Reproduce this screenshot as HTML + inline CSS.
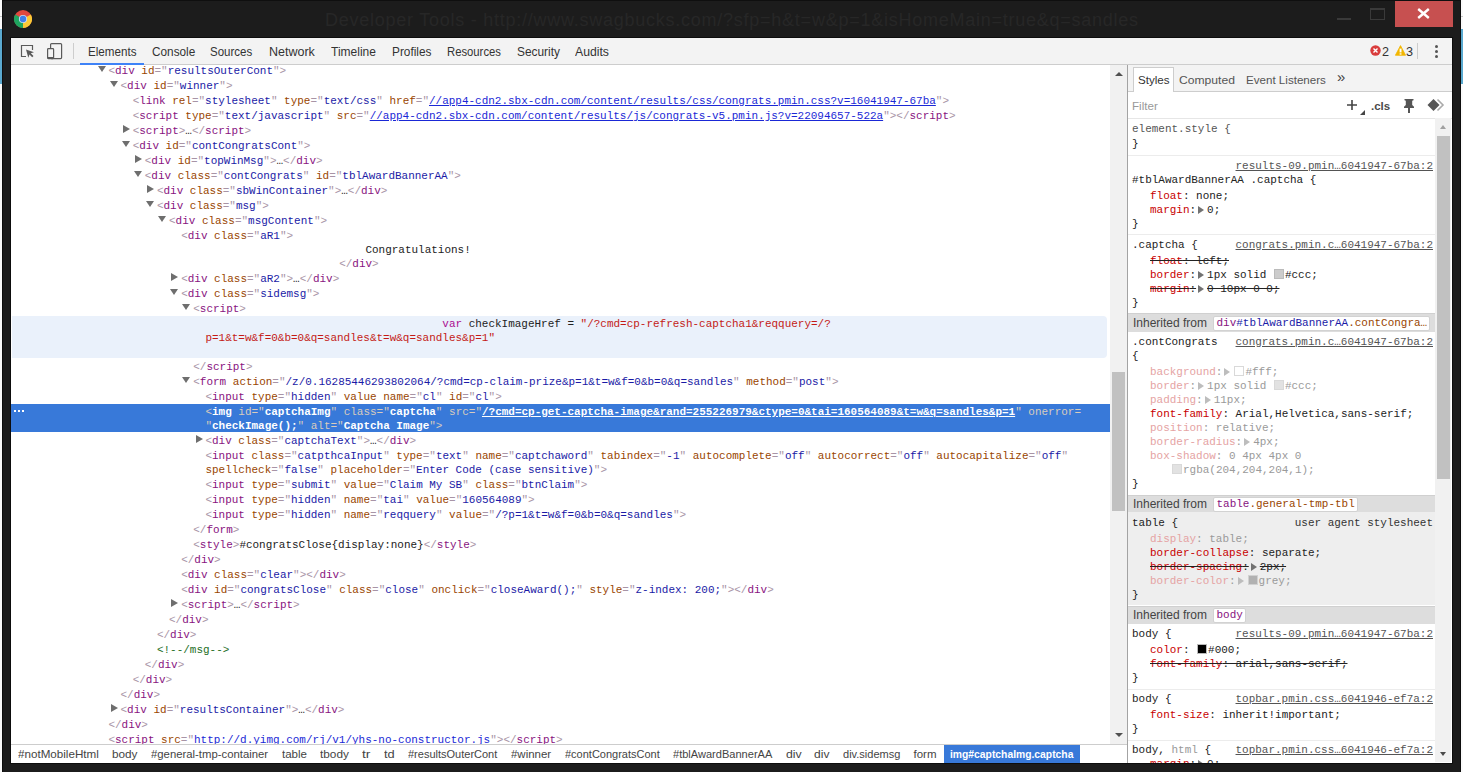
<!DOCTYPE html>
<html><head><meta charset="utf-8">
<style>
*{margin:0;padding:0;box-sizing:border-box}
html,body{width:1463px;height:772px;overflow:hidden;background:#1c1c1c;position:relative;font-family:"Liberation Sans",sans-serif}
.abs{position:absolute}
.mono{font-family:"Liberation Mono",monospace}
/* strips */
#ls,#rs{position:absolute;top:0;width:2px;height:772px;background:#fafafa}
#ls{left:0}#rs{left:1461px}
.sblue{position:absolute;left:0;top:29px;width:2px;height:55px;background:#5aa9cf}
.sgrey{position:absolute;left:0;top:16px;width:2px;height:1px;background:#c8c8c8}
/* frame edges */
#title{position:absolute;left:325px;top:8px;font-size:18px;letter-spacing:0.75px;color:#272727;white-space:pre;line-height:24px}
#closeb{position:absolute;left:1395px;top:1px;width:58px;height:26px;background:#c75050}
/* toolbar */
#tb{position:absolute;left:11px;top:38px;width:1441px;height:27px;background:#f3f3f3;border-bottom:1px solid #cdcdcd}
.tab{position:absolute;top:45px;font-size:11.6px;color:#333;line-height:14px;white-space:pre}
#main{position:absolute;left:11px;top:65px;width:1441px;height:698px;background:#fff}
#tree{position:absolute;left:11px;top:65px;width:1099px;height:679px;overflow:hidden;background:#fff}
.ln{position:absolute;white-space:pre;font-family:"Liberation Mono",monospace;font-size:10.97px;line-height:14px;color:#222}
.br{color:#a894a6}.tg{color:#881280}.at{color:#994500}.av{color:#1a1aa6}.lk{color:#1a28d6;text-decoration:underline}
.tx{color:#222}.cm{color:#236e25}.kw{color:#aa0d91}.st{color:#c41a16}
.sl .br,.sl .at{color:#d9ccbc}.sl .tg,.sl .av,.sl .lk,.sl .tx{color:#fff;font-weight:bold}
.sl .lk{text-decoration:underline}
.selrow{position:absolute;left:11px;width:1099px;background:#3879d9}
.hlbox{position:absolute;left:12px;width:1095px;background:#eaf1fb;border-radius:0 4px 4px 0}
.dots{position:absolute;left:14px;width:10px;height:2px;background:
 linear-gradient(90deg,#fff 0,#fff 2px,transparent 2px,transparent 4px,#fff 4px,#fff 6px,transparent 6px,transparent 8px,#fff 8px,#fff 10px)}
.trid{position:absolute;width:0;height:0;border-left:4px solid transparent;border-right:4px solid transparent;border-top:6.5px solid #6e6e6e;margin-top:2px}
.trir{position:absolute;width:0;height:0;border-top:4px solid transparent;border-bottom:4px solid transparent;border-left:7px solid #6e6e6e;margin-top:1px;margin-left:1px}
/* scrollbar */
#vs{position:absolute;left:1110px;top:65px;width:17px;height:679px;background:#f1f1f1}
#vsep{position:absolute;left:1127px;top:65px;width:1px;height:698px;background:#a3a3a3}
/* breadcrumbs */
#bc{position:absolute;left:11px;top:744px;width:1116px;height:19px;background:#fff;border-top:1px solid #cdcdcd}
.crumb{position:absolute;top:748px;font-size:11.5px;color:#333;line-height:14px;white-space:pre}
/* sidebar */
#side{position:absolute;left:1128px;top:65px;width:324px;height:698px;background:#fff;overflow:hidden}
#stabs{position:absolute;left:0;top:0;width:324px;height:27px;background:#f3f3f3;border-bottom:1px solid #cdcdcd}
.stab{position:absolute;top:7px;font-size:11.6px;color:#333;line-height:14px;white-space:pre}
#filter{position:absolute;left:0;top:27px;width:324px;height:27px;background:#fff;border-bottom:1px solid #e6e6e6}
#spane{position:absolute;left:0;top:53px;width:307px;height:645px;overflow:hidden}
#spane .inner{position:absolute;left:0;top:-118px;width:307px;height:900px}
.sl2{position:absolute;white-space:pre;font-family:"Liberation Mono",monospace;font-size:10.97px;line-height:14px;color:#222}
.sel{color:#222}.es{color:#555}.nm{color:#999}
.pn{color:#c80000}.pv{color:#222}
.ina .pn{color:#e5a3a3}.ina .pv{color:#9a9a9a}.ina .etri:before{border-left-color:#bdbdbd}.ina .sw{opacity:.55}
.strk{text-decoration:line-through;text-decoration-color:#222}
.slink{position:absolute;right:2px;white-space:pre;font-family:"Liberation Mono",monospace;font-size:10.97px;line-height:14px;color:#545454;text-decoration:underline}
.slink.ua{text-decoration:none;color:#333}
.ssep{position:absolute;left:0;width:307px;height:1px;background:#ececec}
.inh{position:absolute;left:0;width:307px;height:18.6px;background:#dddddd;border-top:1px solid #d0d0d0}
.inhl{position:absolute;left:5px;top:1.5px;font-size:12px;color:#444;line-height:14px;white-space:pre}
.inhbox{position:absolute;left:84.5px;top:1.5px;height:15px;background:#fff;border:1px solid #d2d2d2;border-radius:2px;font-family:"Liberation Mono",monospace;font-size:10.97px;line-height:13px;padding-left:3px;white-space:pre;overflow:hidden}
.etri{display:inline-block;width:11px;height:9px;position:relative;vertical-align:-1px}
.etri:before{content:"";position:absolute;left:2px;top:1px;border-top:4px solid transparent;border-bottom:4px solid transparent;border-left:6px solid #727272}
.sw{display:inline-block;width:10px;height:10px;border:1px solid #bbb;vertical-align:-1px;margin:0 1px 0 1px}
#svs{position:absolute;left:1435px;top:118px;width:16px;height:643.6px;background:#f1f1f1}
</style></head><body>
<div class="abs" style="left:2px;top:0;width:1459px;height:1px;background:#0f0f0f"></div>
<div class="abs" style="left:2px;top:0;width:1px;height:772px;background:#0d0d0d"></div>
<div class="abs" style="left:1460px;top:0;width:1px;height:772px;background:#0d0d0d"></div>
<div class="abs" style="left:10px;top:37px;width:1443px;height:727px;background:#0d0d0d"></div>
<div id="ls"><div class="sgrey"></div><div class="sblue"></div></div>
<div id="rs"><div class="sgrey"></div><div class="sblue"></div></div>

<!-- chrome logo -->
<svg class="abs" style="left:14px;top:10px" width="18" height="18" viewBox="0 0 18 18">
 <circle cx="9" cy="9" r="9" fill="#e0483e"/>
 <path d="M9 9 L1.2 4.5 A9 9 0 0 0 9 18 Z" fill="#1ea55f"/>
 <path d="M9 9 L9 18 A9 9 0 0 0 16.8 4.5 Z" fill="#fbc936"/>
 <circle cx="9" cy="9" r="4.1" fill="#c9dcf6"/>
 <circle cx="9" cy="9" r="3.2" fill="#3f7fe9"/>
</svg>
<div id="title">Developer Tools - http://www.swagbucks.com/?sfp=h&amp;t=w&amp;p=1&amp;isHomeMain=true&amp;q=sandles</div>
<div class="abs" style="left:1337px;top:18px;width:14px;height:2px;background:#3a3a3a"></div>
<div class="abs" style="left:1370px;top:8px;width:15px;height:12px;border:1px solid #3a3a3a;border-top-width:2px"></div>
<div id="closeb"></div>
<svg class="abs" style="left:1417px;top:8px" width="13" height="11" viewBox="0 0 13 11"><path d="M1.2 1 L11.8 10 M11.8 1 L1.2 10" stroke="#fff" stroke-width="2.4"/></svg>

<div id="tb"></div>
<!-- toolbar icons -->
<svg class="abs" style="left:20px;top:44px" width="16" height="16" viewBox="0 0 16 16">
 <path d="M6 12.5 H1.5 V1.5 H12.5 V6" fill="none" stroke="#5a5a5a" stroke-width="1.2"/>
 <path d="M6 5.5 L14 8.2 L10.8 9.3 L13.5 12 L12.2 13.3 L9.5 10.6 L8.3 13.8 Z" fill="#5a5a5a"/>
</svg>
<svg class="abs" style="left:46px;top:42px" width="17" height="18" viewBox="0 0 17 18">
 <rect x="4.6" y="1.6" width="11" height="15" rx="1" fill="none" stroke="#5a5a5a" stroke-width="1.2"/>
 <rect x="1.6" y="6.6" width="6" height="10" rx="0.8" fill="#f3f3f3" stroke="#5a5a5a" stroke-width="1.2"/>
 <rect x="1.6" y="15" width="6" height="1.8" fill="#5a5a5a"/>
</svg>
<div class="abs" style="left:73px;top:43px;width:1px;height:16px;background:#cdcdcd"></div>
<div class="abs" style="left:87.80px;top:44.80px;font-size:12.2px;line-height:14px;white-space:pre;color:#333;transform:scaleX(0.9537);transform-origin:0 0;">Elements</div>
<div class="abs" style="left:151.70px;top:44.80px;font-size:12.2px;line-height:14px;white-space:pre;color:#333;transform:scaleX(0.9673);transform-origin:0 0;">Console</div>
<div class="abs" style="left:210.40px;top:44.80px;font-size:12.2px;line-height:14px;white-space:pre;color:#333;transform:scaleX(0.9451);transform-origin:0 0;">Sources</div>
<div class="abs" style="left:268.80px;top:44.80px;font-size:12.2px;line-height:14px;white-space:pre;color:#333;transform:scaleX(1.0258);transform-origin:0 0;">Network</div>
<div class="abs" style="left:330.50px;top:44.80px;font-size:12.2px;line-height:14px;white-space:pre;color:#333;transform:scaleX(0.9857);transform-origin:0 0;">Timeline</div>
<div class="abs" style="left:391.50px;top:44.80px;font-size:12.2px;line-height:14px;white-space:pre;color:#333;transform:scaleX(0.9709);transform-origin:0 0;">Profiles</div>
<div class="abs" style="left:446.50px;top:44.80px;font-size:12.2px;line-height:14px;white-space:pre;color:#333;transform:scaleX(0.9260);transform-origin:0 0;">Resources</div>
<div class="abs" style="left:516.50px;top:44.80px;font-size:12.2px;line-height:14px;white-space:pre;color:#333;transform:scaleX(0.9757);transform-origin:0 0;">Security</div>
<div class="abs" style="left:574.50px;top:44.80px;font-size:12.2px;line-height:14px;white-space:pre;color:#333;transform:scaleX(1.0027);transform-origin:0 0;">Audits</div>
<div class="abs" style="left:80px;top:63px;width:64px;height:2px;background:#3e82f7"></div>
<!-- errors -->
<svg class="abs" style="left:1370px;top:45px" width="11" height="11" viewBox="0 0 11 11"><circle cx="5.5" cy="5.5" r="5.2" fill="#d93c3c"/><path d="M3.5 3.5 L7.5 7.5 M7.5 3.5 L3.5 7.5" stroke="#fff" stroke-width="1.4"/></svg>
<div class="tab" style="left:1382px;top:44.6px;color:#333;font-size:12.6px">2</div>
<svg class="abs" style="left:1395px;top:45px" width="11" height="11" viewBox="0 0 11 11"><path d="M5.5 0.6 L10.6 10.3 H0.4 Z" fill="#f2b600" stroke="#f2b600" stroke-width="0.8" stroke-linejoin="round"/><rect x="4.6" y="3.6" width="1.9" height="3.8" fill="#fff"/><rect x="4.6" y="8.3" width="1.9" height="1.3" fill="#fff"/></svg>
<div class="tab" style="left:1406px;top:44.6px;color:#333;font-size:12.6px">3</div>
<div class="abs" style="left:1417px;top:43px;width:1px;height:16px;background:#cdcdcd"></div>
<div class="abs" style="left:1435px;top:45px;width:3px;height:3px;border-radius:2px;background:#555"></div>
<div class="abs" style="left:1435px;top:50px;width:3px;height:3px;border-radius:2px;background:#555"></div>
<div class="abs" style="left:1435px;top:55px;width:3px;height:3px;border-radius:2px;background:#555"></div>

<div id="main"></div>
<div id="tree">
<div style="position:absolute;left:-11px;top:-65px;width:1110px;height:744px">
<div class="trid" style="left:97.50px;top:64.00px"></div>
<div class="ln" style="left:108.40px;top:64.00px"><span class="br">&lt;</span><span class="tg">div</span><span class="br"> </span><span class="at">id</span><span class="br">="</span><span class="av">resultsOuterCont</span><span class="br">"</span><span class="br">&gt;</span></div>
<div class="trid" style="left:109.62px;top:79.00px"></div>
<div class="ln" style="left:120.53px;top:79.00px"><span class="br">&lt;</span><span class="tg">div</span><span class="br"> </span><span class="at">id</span><span class="br">="</span><span class="av">winner</span><span class="br">"</span><span class="br">&gt;</span></div>
<div class="ln" style="left:132.65px;top:94.00px"><span class="br">&lt;</span><span class="tg">link</span><span class="br"> </span><span class="at">rel</span><span class="br">="</span><span class="av">stylesheet</span><span class="br">"</span><span class="br"> </span><span class="at">type</span><span class="br">="</span><span class="av">text/css</span><span class="br">"</span><span class="br"> </span><span class="at">href</span><span class="br">="</span><span class="lk">//app4-cdn2.sbx-cdn.com/content/results/css/congrats.pmin.css?v=16041947-67ba</span><span class="br">"</span><span class="br">&gt;</span></div>
<div class="ln" style="left:132.65px;top:109.00px"><span class="br">&lt;</span><span class="tg">script</span><span class="br"> </span><span class="at">type</span><span class="br">="</span><span class="av">text/javascript</span><span class="br">"</span><span class="br"> </span><span class="at">src</span><span class="br">="</span><span class="lk">//app4-cdn2.sbx-cdn.com/content/results/js/congrats-v5.pmin.js?v=22094657-522a</span><span class="br">"</span><span class="br">&gt;</span><span class="br">&lt;/</span><span class="tg">script</span><span class="br">&gt;</span></div>
<div class="trir" style="left:121.75px;top:124.00px"></div>
<div class="ln" style="left:132.65px;top:124.00px"><span class="br">&lt;</span><span class="tg">script</span><span class="br">&gt;</span><span class="tx">…</span><span class="br">&lt;/</span><span class="tg">script</span><span class="br">&gt;</span></div>
<div class="trid" style="left:121.75px;top:139.00px"></div>
<div class="ln" style="left:132.65px;top:139.00px"><span class="br">&lt;</span><span class="tg">div</span><span class="br"> </span><span class="at">id</span><span class="br">="</span><span class="av">contCongratsCont</span><span class="br">"</span><span class="br">&gt;</span></div>
<div class="trir" style="left:133.88px;top:154.00px"></div>
<div class="ln" style="left:144.78px;top:154.00px"><span class="br">&lt;</span><span class="tg">div</span><span class="br"> </span><span class="at">id</span><span class="br">="</span><span class="av">topWinMsg</span><span class="br">"</span><span class="br">&gt;</span><span class="tx">…</span><span class="br">&lt;/</span><span class="tg">div</span><span class="br">&gt;</span></div>
<div class="trid" style="left:133.88px;top:169.00px"></div>
<div class="ln" style="left:144.78px;top:169.00px"><span class="br">&lt;</span><span class="tg">div</span><span class="br"> </span><span class="at">class</span><span class="br">="</span><span class="av">contCongrats</span><span class="br">"</span><span class="br"> </span><span class="at">id</span><span class="br">="</span><span class="av">tblAwardBannerAA</span><span class="br">"</span><span class="br">&gt;</span></div>
<div class="trir" style="left:146.00px;top:184.00px"></div>
<div class="ln" style="left:156.90px;top:184.00px"><span class="br">&lt;</span><span class="tg">div</span><span class="br"> </span><span class="at">class</span><span class="br">="</span><span class="av">sbWinContainer</span><span class="br">"</span><span class="br">&gt;</span><span class="tx">…</span><span class="br">&lt;/</span><span class="tg">div</span><span class="br">&gt;</span></div>
<div class="trid" style="left:146.00px;top:199.00px"></div>
<div class="ln" style="left:156.90px;top:199.00px"><span class="br">&lt;</span><span class="tg">div</span><span class="br"> </span><span class="at">class</span><span class="br">="</span><span class="av">msg</span><span class="br">"</span><span class="br">&gt;</span></div>
<div class="trid" style="left:158.12px;top:214.00px"></div>
<div class="ln" style="left:169.03px;top:214.00px"><span class="br">&lt;</span><span class="tg">div</span><span class="br"> </span><span class="at">class</span><span class="br">="</span><span class="av">msgContent</span><span class="br">"</span><span class="br">&gt;</span></div>
<div class="ln" style="left:181.15px;top:229.00px"><span class="br">&lt;</span><span class="tg">div</span><span class="br"> </span><span class="at">class</span><span class="br">="</span><span class="av">aR1</span><span class="br">"</span><span class="br">&gt;</span></div>
<div class="ln" style="left:181.15px;top:243.00px">                            <span class="tx">Congratulations!</span></div>
<div class="ln" style="left:181.15px;top:257.00px">                        <span class="br">&lt;/</span><span class="tg">div</span><span class="br">&gt;</span></div>
<div class="trir" style="left:170.25px;top:272.00px"></div>
<div class="ln" style="left:181.15px;top:272.00px"><span class="br">&lt;</span><span class="tg">div</span><span class="br"> </span><span class="at">class</span><span class="br">="</span><span class="av">aR2</span><span class="br">"</span><span class="br">&gt;</span><span class="tx">…</span><span class="br">&lt;/</span><span class="tg">div</span><span class="br">&gt;</span></div>
<div class="trid" style="left:170.25px;top:287.00px"></div>
<div class="ln" style="left:181.15px;top:287.00px"><span class="br">&lt;</span><span class="tg">div</span><span class="br"> </span><span class="at">class</span><span class="br">="</span><span class="av">sidemsg</span><span class="br">"</span><span class="br">&gt;</span></div>
<div class="trid" style="left:182.38px;top:302.00px"></div>
<div class="ln" style="left:193.28px;top:302.00px"><span class="br">&lt;</span><span class="tg">script</span><span class="br">&gt;</span></div>
<div class="hlbox" style="top:316.00px;height:42px"></div>
<div class="ln" style="left:205.40px;top:317.00px">                                    <span class="kw">var</span><span class="tx"> checkImageHref = </span><span class="st">"/?cmd=cp-refresh-captcha1&amp;reqquery=/?</span></div>
<div class="ln" style="left:205.40px;top:331.00px"><span class="st">p=1&amp;t=w&amp;f=0&amp;b=0&amp;q=sandles&amp;t=w&amp;q=sandles&amp;p=1"</span></div>
<div class="ln" style="left:193.28px;top:360.00px"><span class="br">&lt;/</span><span class="tg">script</span><span class="br">&gt;</span></div>
<div class="trid" style="left:182.38px;top:375.00px"></div>
<div class="ln" style="left:193.28px;top:375.00px"><span class="br">&lt;</span><span class="tg">form</span><span class="br"> </span><span class="at">action</span><span class="br">="</span><span class="av">/z/0.16285446293802064/?cmd=cp-claim-prize&amp;p=1&amp;t=w&amp;f=0&amp;b=0&amp;q=sandles</span><span class="br">"</span><span class="br"> </span><span class="at">method</span><span class="br">="</span><span class="av">post</span><span class="br">"</span><span class="br">&gt;</span></div>
<div class="ln" style="left:205.40px;top:390.00px"><span class="br">&lt;</span><span class="tg">input</span><span class="br"> </span><span class="at">type</span><span class="br">="</span><span class="av">hidden</span><span class="br">"</span><span class="br"> </span><span class="at">value</span><span class="br"> </span><span class="at">name</span><span class="br">="</span><span class="av">cl</span><span class="br">"</span><span class="br"> </span><span class="at">id</span><span class="br">="</span><span class="av">cl</span><span class="br">"</span><span class="br">&gt;</span></div>
<div class="selrow" style="top:404.00px;height:28px"></div>
<div class="dots" style="top:409.50px"></div>
<div class="ln sl" style="left:205.40px;top:405.00px"><span class="br">&lt;</span><span class="tg">img</span><span class="br"> </span><span class="at">id</span><span class="br">="</span><span class="av">captchaImg</span><span class="br">"</span><span class="br"> </span><span class="at">class</span><span class="br">="</span><span class="av">captcha</span><span class="br">"</span><span class="br"> </span><span class="at">src</span><span class="br">="</span><span class="lk">/?cmd=cp-get-captcha-image&amp;rand=255226979&amp;ctype=0&amp;tai=160564089&amp;t=w&amp;q=sandles&amp;p=1</span><span class="br">"</span><span class="br"> </span><span class="at">onerror</span><span class="br">=</span></div>
<div class="ln sl" style="left:205.40px;top:419.00px"><span class="br">"</span><span class="av">checkImage();</span><span class="br">"</span><span class="br"> </span><span class="at">alt</span><span class="br">="</span><span class="av">Captcha Image</span><span class="br">"</span><span class="br">&gt;</span></div>
<div class="trir" style="left:194.50px;top:434.00px"></div>
<div class="ln" style="left:205.40px;top:434.00px"><span class="br">&lt;</span><span class="tg">div</span><span class="br"> </span><span class="at">class</span><span class="br">="</span><span class="av">captchaText</span><span class="br">"</span><span class="br">&gt;</span><span class="tx">…</span><span class="br">&lt;/</span><span class="tg">div</span><span class="br">&gt;</span></div>
<div class="ln" style="left:205.40px;top:449.00px"><span class="br">&lt;</span><span class="tg">input</span><span class="br"> </span><span class="at">class</span><span class="br">="</span><span class="av">catpthcaInput</span><span class="br">"</span><span class="br"> </span><span class="at">type</span><span class="br">="</span><span class="av">text</span><span class="br">"</span><span class="br"> </span><span class="at">name</span><span class="br">="</span><span class="av">captchaword</span><span class="br">"</span><span class="br"> </span><span class="at">tabindex</span><span class="br">="</span><span class="av">-1</span><span class="br">"</span><span class="br"> </span><span class="at">autocomplete</span><span class="br">="</span><span class="av">off</span><span class="br">"</span><span class="br"> </span><span class="at">autocorrect</span><span class="br">="</span><span class="av">off</span><span class="br">"</span><span class="br"> </span><span class="at">autocapitalize</span><span class="br">="</span><span class="av">off</span><span class="br">"</span></div>
<div class="ln" style="left:205.40px;top:463.00px"><span class="at">spellcheck</span><span class="br">="</span><span class="av">false</span><span class="br">"</span><span class="br"> </span><span class="at">placeholder</span><span class="br">="</span><span class="av">Enter Code (case sensitive)</span><span class="br">"</span><span class="br">&gt;</span></div>
<div class="ln" style="left:205.40px;top:478.00px"><span class="br">&lt;</span><span class="tg">input</span><span class="br"> </span><span class="at">type</span><span class="br">="</span><span class="av">submit</span><span class="br">"</span><span class="br"> </span><span class="at">value</span><span class="br">="</span><span class="av">Claim My SB</span><span class="br">"</span><span class="br"> </span><span class="at">class</span><span class="br">="</span><span class="av">btnClaim</span><span class="br">"</span><span class="br">&gt;</span></div>
<div class="ln" style="left:205.40px;top:493.00px"><span class="br">&lt;</span><span class="tg">input</span><span class="br"> </span><span class="at">type</span><span class="br">="</span><span class="av">hidden</span><span class="br">"</span><span class="br"> </span><span class="at">name</span><span class="br">="</span><span class="av">tai</span><span class="br">"</span><span class="br"> </span><span class="at">value</span><span class="br">="</span><span class="av">160564089</span><span class="br">"</span><span class="br">&gt;</span></div>
<div class="ln" style="left:205.40px;top:508.00px"><span class="br">&lt;</span><span class="tg">input</span><span class="br"> </span><span class="at">type</span><span class="br">="</span><span class="av">hidden</span><span class="br">"</span><span class="br"> </span><span class="at">name</span><span class="br">="</span><span class="av">reqquery</span><span class="br">"</span><span class="br"> </span><span class="at">value</span><span class="br">="</span><span class="av">/?p=1&amp;t=w&amp;f=0&amp;b=0&amp;q=sandles</span><span class="br">"</span><span class="br">&gt;</span></div>
<div class="ln" style="left:193.28px;top:523.00px"><span class="br">&lt;/</span><span class="tg">form</span><span class="br">&gt;</span></div>
<div class="ln" style="left:193.28px;top:538.00px"><span class="br">&lt;</span><span class="tg">style</span><span class="br">&gt;</span><span class="tx">#congratsClose{display:none}</span><span class="br">&lt;/</span><span class="tg">style</span><span class="br">&gt;</span></div>
<div class="ln" style="left:181.15px;top:553.00px"><span class="br">&lt;/</span><span class="tg">div</span><span class="br">&gt;</span></div>
<div class="ln" style="left:181.15px;top:568.00px"><span class="br">&lt;</span><span class="tg">div</span><span class="br"> </span><span class="at">class</span><span class="br">="</span><span class="av">clear</span><span class="br">"</span><span class="br">&gt;</span><span class="br">&lt;/</span><span class="tg">div</span><span class="br">&gt;</span></div>
<div class="ln" style="left:181.15px;top:583.00px"><span class="br">&lt;</span><span class="tg">div</span><span class="br"> </span><span class="at">id</span><span class="br">="</span><span class="av">congratsClose</span><span class="br">"</span><span class="br"> </span><span class="at">class</span><span class="br">="</span><span class="av">close</span><span class="br">"</span><span class="br"> </span><span class="at">onclick</span><span class="br">="</span><span class="av">closeAward();</span><span class="br">"</span><span class="br"> </span><span class="at">style</span><span class="br">="</span><span class="av">z-index: 200;</span><span class="br">"</span><span class="br">&gt;</span><span class="br">&lt;/</span><span class="tg">div</span><span class="br">&gt;</span></div>
<div class="trir" style="left:170.25px;top:598.00px"></div>
<div class="ln" style="left:181.15px;top:598.00px"><span class="br">&lt;</span><span class="tg">script</span><span class="br">&gt;</span><span class="tx">…</span><span class="br">&lt;/</span><span class="tg">script</span><span class="br">&gt;</span></div>
<div class="ln" style="left:169.03px;top:613.00px"><span class="br">&lt;/</span><span class="tg">div</span><span class="br">&gt;</span></div>
<div class="ln" style="left:156.90px;top:628.00px"><span class="br">&lt;/</span><span class="tg">div</span><span class="br">&gt;</span></div>
<div class="ln" style="left:156.90px;top:643.00px"><span class="cm">&lt;!--/msg--&gt;</span></div>
<div class="ln" style="left:144.78px;top:658.00px"><span class="br">&lt;/</span><span class="tg">div</span><span class="br">&gt;</span></div>
<div class="ln" style="left:132.65px;top:673.00px"><span class="br">&lt;/</span><span class="tg">div</span><span class="br">&gt;</span></div>
<div class="ln" style="left:120.53px;top:688.00px"><span class="br">&lt;/</span><span class="tg">div</span><span class="br">&gt;</span></div>
<div class="trir" style="left:109.62px;top:703.00px"></div>
<div class="ln" style="left:120.53px;top:703.00px"><span class="br">&lt;</span><span class="tg">div</span><span class="br"> </span><span class="at">id</span><span class="br">="</span><span class="av">resultsContainer</span><span class="br">"</span><span class="br">&gt;</span><span class="tx">…</span><span class="br">&lt;/</span><span class="tg">div</span><span class="br">&gt;</span></div>
<div class="ln" style="left:108.40px;top:718.00px"><span class="br">&lt;/</span><span class="tg">div</span><span class="br">&gt;</span></div>
<div class="ln" style="left:108.40px;top:733.00px"><span class="br">&lt;</span><span class="tg">script</span><span class="br"> </span><span class="at">src</span><span class="br">="</span><span class="lk">http://d.yimg.com/rj/v1/yhs-no-constructor.js</span><span class="br">"</span><span class="br">&gt;</span><span class="br">&lt;/</span><span class="tg">script</span><span class="br">&gt;</span></div>
</div>
</div>
<div id="vs">
 <div class="abs" style="left:4.5px;top:7px;width:0;height:0;border-left:4px solid transparent;border-right:4px solid transparent;border-bottom:4.5px solid #505050"></div>
 <div class="abs" style="left:2px;top:307px;width:13px;height:139px;background:#c1c1c1"></div>
 <div class="abs" style="left:4.5px;top:668px;width:0;height:0;border-left:4px solid transparent;border-right:4px solid transparent;border-top:4.5px solid #505050"></div>
</div>
<div id="vsep"></div>
<div id="bc"></div>
<div class="abs" style="left:944px;top:745px;width:136px;height:18px;background:#3879d9"></div>
<div class="abs" style="left:17.70px;top:746.60px;font-size:11.5px;line-height:14px;white-space:pre;color:#444;transform:scaleX(1.0113);transform-origin:0 0;">#notMobileHtml</div>
<div class="abs" style="left:112.00px;top:746.60px;font-size:11.5px;line-height:14px;white-space:pre;color:#444;transform:scaleX(1.0225);transform-origin:0 0;">body</div>
<div class="abs" style="left:150.80px;top:746.60px;font-size:11.5px;line-height:14px;white-space:pre;color:#444;transform:scaleX(0.9848);transform-origin:0 0;">#general-tmp-container</div>
<div class="abs" style="left:281.60px;top:746.60px;font-size:11.5px;line-height:14px;white-space:pre;color:#444;transform:scaleX(1.0025);transform-origin:0 0;">table</div>
<div class="abs" style="left:320.10px;top:746.60px;font-size:11.5px;line-height:14px;white-space:pre;color:#444;transform:scaleX(1.0273);transform-origin:0 0;">tbody</div>
<div class="abs" style="left:362.30px;top:746.60px;font-size:11.5px;line-height:14px;white-space:pre;color:#444;transform:scaleX(1.2100);transform-origin:0 0;">tr</div>
<div class="abs" style="left:383.90px;top:746.60px;font-size:11.5px;line-height:14px;white-space:pre;color:#444;transform:scaleX(1.1157);transform-origin:0 0;">td</div>
<div class="abs" style="left:408.20px;top:746.60px;font-size:11.5px;line-height:14px;white-space:pre;color:#444;transform:scaleX(0.9569);transform-origin:0 0;">#resultsOuterCont</div>
<div class="abs" style="left:511.20px;top:746.60px;font-size:11.5px;line-height:14px;white-space:pre;color:#444;transform:scaleX(0.9957);transform-origin:0 0;">#winner</div>
<div class="abs" style="left:564.50px;top:746.60px;font-size:11.5px;line-height:14px;white-space:pre;color:#444;transform:scaleX(0.9557);transform-origin:0 0;">#contCongratsCont</div>
<div class="abs" style="left:672.70px;top:746.60px;font-size:11.5px;line-height:14px;white-space:pre;color:#444;transform:scaleX(0.9607);transform-origin:0 0;">#tblAwardBannerAA</div>
<div class="abs" style="left:785.50px;top:746.60px;font-size:11.5px;line-height:14px;white-space:pre;color:#444;transform:scaleX(1.0679);transform-origin:0 0;">div</div>
<div class="abs" style="left:814.10px;top:746.60px;font-size:11.5px;line-height:14px;white-space:pre;color:#444;transform:scaleX(1.0475);transform-origin:0 0;">div</div>
<div class="abs" style="left:842.50px;top:746.60px;font-size:11.5px;line-height:14px;white-space:pre;color:#444;transform:scaleX(0.9588);transform-origin:0 0;">div.sidemsg</div>
<div class="abs" style="left:913.50px;top:746.60px;font-size:11.5px;line-height:14px;white-space:pre;color:#444;transform:scaleX(1.0000);transform-origin:0 0;">form</div>
<div class="abs" style="left:950.10px;top:746.60px;font-size:11.5px;line-height:14px;white-space:pre;color:#fff;transform:scaleX(0.8981);transform-origin:0 0;font-weight:bold;">img#captchaImg.captcha</div>

<div id="side">
 <div id="stabs">
  <div class="abs" style="left:5px;top:2px;width:41px;height:25px;background:#fff;border:1px solid #cdcdcd;border-bottom:none"></div>
  <div class="stab" style="left:10px;top:8px;color:#333">Styles</div>
  <div class="stab" style="left:51px;top:8px;color:#555;transform:scaleX(1.045);transform-origin:0 0">Computed</div>
  <div class="stab" style="left:118px;top:8px;color:#555">Event Listeners</div>
  <div class="stab" style="left:209px;font-size:15px;top:4.5px;color:#444">&#187;</div>
 </div>
 <div id="filter">
  <div class="stab" style="left:4px;top:6.5px;color:#999">Filter</div>
  <svg class="abs" style="left:218px;top:7px" width="12" height="12" viewBox="0 0 12 12"><path d="M6 1 V11 M1 6 H11" stroke="#444" stroke-width="1.6"/></svg>
  <div class="abs" style="left:232px;top:18px;width:0;height:0;border-left:5px solid transparent;border-bottom:5px solid #444"></div>
  <div class="stab" style="left:243px;top:6.5px;color:#4a4a4a;font-size:11.5px;font-weight:bold">.cls</div>
  <svg class="abs" style="left:275px;top:4.5px" width="13" height="16" viewBox="0 0 13 16"><path d="M1.5 2 H10.5 V3.2 L9.2 3.8 V8 L11 9.8 V11 H7 V16 H5 V11 H1 V9.8 L2.8 8 V3.8 L1.5 3.2 Z" fill="#555"/></svg>
  <svg class="abs" style="left:299px;top:6px" width="18" height="14" viewBox="0 0 18 14"><path d="M6.5 1 L12.5 7 L6.5 13 L0.5 7 Z" fill="#555"/><path d="M10.5 1.5 L16 7 L10.5 12.5" fill="none" stroke="#aaa" stroke-width="1.6"/></svg>
 </div>
 <div id="spane"><div class="inner">
<div class="sl2 " style="left:4px;top:121.50px"><span class="sel es">element.style {</span></div>
<div class="sl2 " style="left:4px;top:136.50px"><span class="sel">}</span></div>
<div class="ssep" style="top:155px"></div>
<div class="slink" style="top:158.50px">results-09.pmin…6041947-67ba:2</div>
<div class="sl2 " style="left:4px;top:173.00px"><span class="sel">#tblAwardBannerAA .captcha {</span></div>
<div class="sl2 " style="left:22px;top:189.00px"><span class="pn">float</span><span class="pv">: none;</span></div>
<div class="sl2 " style="left:22px;top:203.00px"><span class="pn">margin</span><span class="pv">:<span class="etri"></span>0;</span></div>
<div class="sl2 " style="left:4px;top:217.00px"><span class="sel">}</span></div>
<div class="ssep" style="top:234.4px"></div>
<div class="slink" style="top:237.80px">congrats.pmin.c…6041947-67ba:2</div>
<div class="sl2 " style="left:4px;top:237.80px"><span class="sel">.captcha {</span></div>
<div class="sl2 strk" style="left:22px;top:253.70px"><span class="pn">float</span><span class="pv">: left;</span></div>
<div class="sl2 " style="left:22px;top:267.90px"><span class="pn">border</span><span class="pv">:<span class="etri"></span>1px solid <span class="sw" style="background:#ccc"></span>#ccc;</span></div>
<div class="sl2 strk" style="left:22px;top:281.70px"><span class="pn">margin</span><span class="pv">:<span class="etri"></span>0 10px 0 0;</span></div>
<div class="sl2 " style="left:4px;top:295.70px"><span class="sel">}</span></div>
<div class="inh" style="top:313.2px"><span class="inhl">Inherited from</span><span class="inhbox" style="width:217px"><span class="tg">div</span><span class="av">#tblAwardBannerAA</span><span class="at">.contCongra…</span></span></div>
<div class="slink" style="top:334.50px">congrats.pmin.c…6041947-67ba:2</div>
<div class="sl2 " style="left:4px;top:334.50px"><span class="sel">.contCongrats</span></div>
<div class="sl2 " style="left:4px;top:348.50px"><span class="sel">{</span></div>
<div class="sl2 ina " style="left:22px;top:364.50px"><span class="pn">background</span><span class="pv">:<span class="etri"></span><span class="sw" style="background:#fff"></span>#fff;</span></div>
<div class="sl2 ina " style="left:22px;top:378.50px"><span class="pn">border</span><span class="pv">:<span class="etri"></span>1px solid <span class="sw" style="background:#ccc"></span>#ccc;</span></div>
<div class="sl2 ina " style="left:22px;top:392.50px"><span class="pn">padding</span><span class="pv">:<span class="etri"></span>11px;</span></div>
<div class="sl2 " style="left:22px;top:406.50px"><span class="pn">font-family</span><span class="pv">: Arial,Helvetica,sans-serif;</span></div>
<div class="sl2 ina " style="left:22px;top:420.50px"><span class="pn">position</span><span class="pv">: relative;</span></div>
<div class="sl2 ina " style="left:22px;top:434.50px"><span class="pn">border-radius</span><span class="pv">:<span class="etri"></span>4px;</span></div>
<div class="sl2 ina " style="left:22px;top:448.50px"><span class="pn">box-shadow</span><span class="pv">: 0 4px 4px 0</span></div>
<div class="sl2 ina" style="left:43px;top:462.50px"><span class="pv"><span class="sw" style="background:rgb(204,204,204)"></span>rgba(204,204,204,1);</span></div>
<div class="sl2 " style="left:4px;top:476.50px"><span class="sel">}</span></div>
<div class="inh" style="top:494.7px"><span class="inhl">Inherited from</span><span class="inhbox" style="width:145px"><span class="tg">table</span><span class="at">.general-tmp-tbl</span></span></div>
<div style="position:absolute;left:0;top:512.4px;width:307px;height:93.1px;background:#eeeeee"></div>
<div class="slink ua" style="top:516.00px">user agent stylesheet</div>
<div class="sl2 " style="left:4px;top:516.00px"><span class="sel">table {</span></div>
<div class="sl2 ina " style="left:22px;top:532.00px"><span class="pn">display</span><span class="pv">: table;</span></div>
<div class="sl2 " style="left:22px;top:546.00px"><span class="pn">border-collapse</span><span class="pv">: separate;</span></div>
<div class="sl2 strk" style="left:22px;top:560.00px"><span class="pn">border-spacing</span><span class="pv">:<span class="etri"></span>2px;</span></div>
<div class="sl2 ina " style="left:22px;top:574.00px"><span class="pn">border-color</span><span class="pv">:<span class="etri"></span><span class="sw" style="background:grey"></span>grey;</span></div>
<div class="sl2 " style="left:4px;top:588.00px"><span class="sel">}</span></div>
<div class="inh" style="top:605.5px"><span class="inhl">Inherited from</span><span class="inhbox" style="width:33px"><span class="tg">body</span></span></div>
<div class="slink" style="top:627.00px">results-09.pmin…6041947-67ba:2</div>
<div class="sl2 " style="left:4px;top:627.00px"><span class="sel">body {</span></div>
<div class="sl2 " style="left:22px;top:643.00px"><span class="pn">color</span><span class="pv">: <span class="sw" style="background:#000"></span>#000;</span></div>
<div class="sl2 strk" style="left:22px;top:657.00px"><span class="pn">font-family</span><span class="pv">: arial,sans-serif;</span></div>
<div class="sl2 " style="left:4px;top:671.00px"><span class="sel">}</span></div>
<div class="ssep" style="top:688.6px"></div>
<div class="slink" style="top:692.00px">topbar.pmin.css…6041946-ef7a:2</div>
<div class="sl2 " style="left:4px;top:692.00px"><span class="sel">body {</span></div>
<div class="sl2 " style="left:22px;top:708.00px"><span class="pn">font-size</span><span class="pv">: inherit!important;</span></div>
<div class="sl2 " style="left:4px;top:722.00px"><span class="sel">}</span></div>
<div class="ssep" style="top:739.7px"></div>
<div class="slink" style="top:743.00px">topbar.pmin.css…6041946-ef7a:2</div>
<div class="sl2 " style="left:4px;top:743.00px"><span class="sel">body, <span class="nm">html</span> {</span></div>
<div class="sl2 " style="left:22px;top:757.00px"><span class="pn">margin</span><span class="pv">:<span class="etri"></span>0;</span></div>
 </div></div>
</div>
<div id="svs">
 <div class="abs" style="left:5px;top:7px;width:0;height:0;border-left:3.5px solid transparent;border-right:3.5px solid transparent;border-bottom:4px solid #a0a0a0"></div>
 <div class="abs" style="left:2px;top:18px;width:13px;height:343px;background:#c1c1c1"></div>
 <div class="abs" style="left:5px;top:634px;width:0;height:0;border-left:3.5px solid transparent;border-right:3.5px solid transparent;border-top:4px solid #4a4a4a"></div>
</div>
</body></html>
